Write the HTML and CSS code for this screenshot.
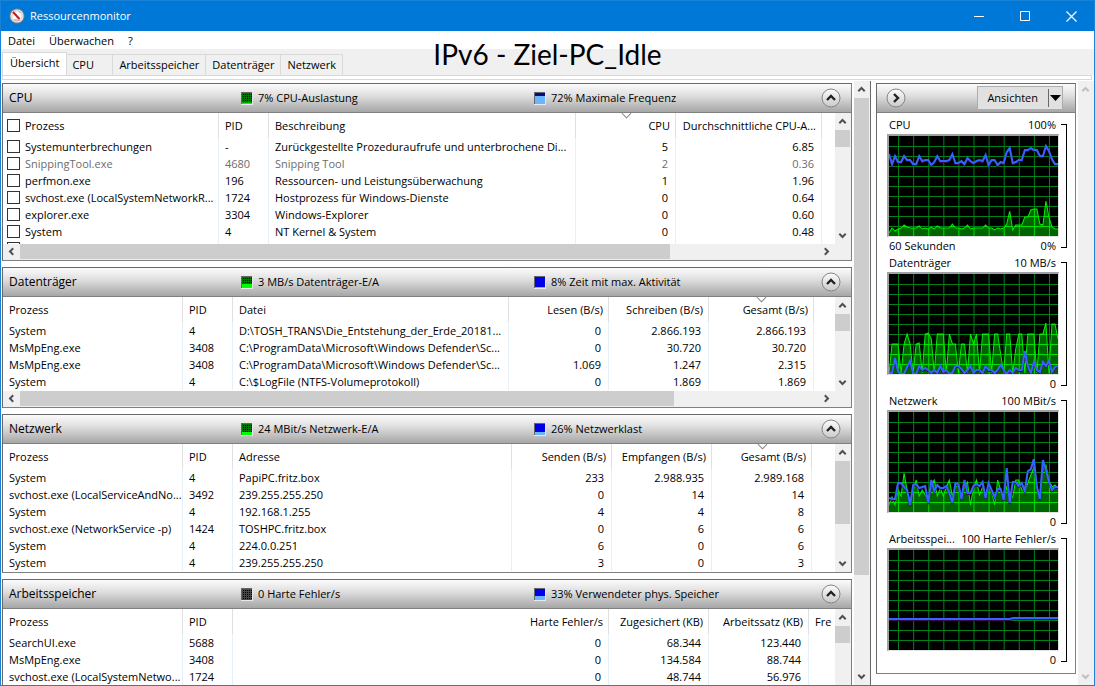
FILE: index.html
```html
<!DOCTYPE html>
<html lang="de">
<head>
  <meta charset="utf-8">
  <title>Ressourcenmonitor</title>
  <link rel="stylesheet" href="styles.css">
</head>

<body>
  <!-- shared shapes -->
  <svg class="defs" width="0" height="0" aria-hidden="true">
    <defs>
      <pattern id="dots" width="2" height="2" patternUnits="userSpaceOnUse">
        <rect width="2" height="2" fill="#007800"/>
        <rect width="1" height="1" fill="#001000"/>
      </pattern>
      <pattern id="dots-dark" width="2" height="2" patternUnits="userSpaceOnUse">
        <rect width="2" height="2" fill="#484848"/>
        <rect width="1" height="1" fill="#000"/>
      </pattern>
      <pattern id="dots-blue" width="2" height="2" patternUnits="userSpaceOnUse">
        <rect width="2" height="2" fill="#0000e6"/>
        <rect width="1" height="1" fill="#000070"/>
      </pattern>
      <linearGradient id="knob" x1="0" y1="0" x2="0" y2="1">
        <stop offset="0" stop-color="#fdfdfd"/>
        <stop offset="1" stop-color="#c9c9c9"/>
      </linearGradient>
      <symbol id="up" viewBox="0 0 9 9"><path d="M1.3 6.2 4.5 3l3.2 3.2" fill="none" stroke="currentColor" stroke-width="2"/></symbol>
      <symbol id="down" viewBox="0 0 9 9"><path d="M1.3 2.8 4.5 6l3.2-3.2" fill="none" stroke="currentColor" stroke-width="2"/></symbol>
      <symbol id="left" viewBox="0 0 9 9"><path d="M6.2 1.3 3 4.5l3.2 3.2" fill="none" stroke="currentColor" stroke-width="2"/></symbol>
      <symbol id="right" viewBox="0 0 9 9"><path d="M2.8 1.3 6 4.5 2.8 7.7" fill="none" stroke="currentColor" stroke-width="2"/></symbol>
      <symbol id="round-up" viewBox="0 0 20 20">
        <circle cx="10" cy="10" r="9" fill="url(#knob)" stroke="#858585"/>
        <path d="M6 12l4-4 4 4" fill="none" stroke="#222" stroke-width="2.4"/>
      </symbol>
      <symbol id="round-right" viewBox="0 0 20 20">
        <circle cx="10" cy="10" r="9" fill="url(#knob)" stroke="#858585"/>
        <path d="M8 6l4 4-4 4" fill="none" stroke="#222" stroke-width="2.4"/>
      </symbol>
    </defs>
  </svg>

  <div class="window">
    <header class="titlebar">
      <svg class="app-icon" width="16" height="16" viewBox="0 0 16 16">
        <circle cx="8" cy="8" r="7.5" fill="#8d8580"/>
        <circle cx="8" cy="8" r="6.6" fill="#e9e4df"/>
        <circle cx="8" cy="8" r="5" fill="#fff" stroke="#c4bdb6" stroke-width=".6"/>
        <path d="M4 4l6.500 7" stroke="#c4161c" stroke-width="2"/>
        <path d="M10 3.500l1.600 1.800M5 12h6" stroke="#8a8a8a" stroke-width=".8"/>
      </svg>
      <span class="window-title">Ressourcenmonitor</span>
      <button class="window-button" aria-label="Minimieren"><svg width="11" height="11"><path d="M0 5.500h10" stroke="#fff"/></svg></button>
      <button class="window-button" aria-label="Maximieren"><svg width="11" height="11"><path d="M.5.5h9v9h-9z" fill="none" stroke="#fff"/></svg></button>
      <button class="window-button" aria-label="Schließen"><svg width="11" height="11"><path d="M.5.5l10 10M10.500.5l-10 10" stroke="#fff" stroke-width="1.2"/></svg></button>
    </header>

    <nav class="menubar">
      <button>Datei</button>
      <button>Überwachen</button>
      <button>?</button>
    </nav>

    <div class="tabs" role="tablist">
      <button class="tab active" role="tab" aria-selected="true">Übersicht</button>
      <button class="tab tab-cpu" role="tab">CPU</button>
      <button class="tab" role="tab">Arbeitsspeicher</button>
      <button class="tab" role="tab">Datenträger</button>
      <button class="tab" role="tab">Netzwerk</button>
    </div>
    <div class="tab-edge"></div>

    <h1 class="caption">IPv6 - Ziel-PC_Idle</h1>

    <main class="content">
      <div class="sections">

        <section class="panel">
          <div class="panel-head">
            <h2>CPU</h2>
            <span class="meter"><svg width="12" height="13"><path d="M0 0h12v13H0z" fill="#e8e8e8"/><path d="M0 0h11v12H0z" fill="#666"/><path d="M1 1h10v11H1z" fill="url(#dots)"/><path d="M1 10.500h10V12H1z" fill="#0f0"/></svg>7% CPU-Auslastung</span>
            <span class="meter"><svg width="12" height="13"><path d="M0 0h12v13H0z" fill="#e8e8e8"/><path d="M0 0h11v12H0z" fill="#666"/><path d="M1 1h10v4H1z" fill="url(#dots-blue)"/><path d="M1 4h10v8H1z" fill="#6cb4ff"/></svg>72% Maximale Frequenz</span>
            <button class="round" aria-label="CPU einklappen"><svg width="20" height="20"><use href="#round-up"/></svg></button>
          </div>
          <div class="list list-cpu">
            <div class="list-view">
              <table>
                <colgroup><col class="w216"><col class="w50"><col class="w307"><col class="w100"><col class="w146"><col></colgroup>
                <thead>
                  <tr><th class="check"><label><input type="checkbox"> Prozess</label></th><th>PID</th><th>Beschreibung</th><th class="num sorted">CPU</th><th class="num">Durchschnittliche CPU-A...</th><th></th></tr>
                </thead>
                <tbody>
                  <tr><td class="check"><label><input type="checkbox">Systemunterbrechungen</label></td><td>-</td><td>Zurückgestellte Prozeduraufrufe und unterbrochene Di...</td><td class="num">5</td><td class="num">6.85</td><td></td></tr>
                  <tr class="dim"><td class="check"><label><input type="checkbox">SnippingTool.exe</label></td><td>4680</td><td>Snipping Tool</td><td class="num">2</td><td class="num">0.36</td><td></td></tr>
                  <tr><td class="check"><label><input type="checkbox">perfmon.exe</label></td><td>196</td><td>Ressourcen- und Leistungsüberwachung</td><td class="num">1</td><td class="num">1.96</td><td></td></tr>
                  <tr><td class="check"><label><input type="checkbox">svchost.exe (LocalSystemNetworkR...</label></td><td>1724</td><td>Hostprozess für Windows-Dienste</td><td class="num">0</td><td class="num">0.64</td><td></td></tr>
                  <tr><td class="check"><label><input type="checkbox">explorer.exe</label></td><td>3304</td><td>Windows-Explorer</td><td class="num">0</td><td class="num">0.60</td><td></td></tr>
                  <tr><td class="check"><label><input type="checkbox">System</label></td><td>4</td><td>NT Kernel &amp; System</td><td class="num">0</td><td class="num">0.48</td><td></td></tr>
                  <tr><td class="check"><label><input type="checkbox" aria-label="Prozess"></label></td><td></td><td></td><td></td><td></td><td></td></tr>
                </tbody>
              </table>
            </div>
            <div class="vscroll">
              <button aria-label="Nach oben"><svg width="9" height="9"><use href="#up"/></svg></button>
              <div class="thumb"></div>
              <button class="end" aria-label="Nach unten"><svg width="9" height="9"><use href="#down"/></svg></button>
            </div>
          </div>
          <div class="hscroll">
            <button aria-label="Nach links"><svg width="9" height="9"><use href="#left"/></svg></button>
            <div class="track"><div class="thumb thumb-cpu"></div></div>
            <button aria-label="Nach rechts"><svg width="9" height="9"><use href="#right"/></svg></button>
          </div>
        </section>

        <section class="panel">
          <div class="panel-head">
            <h2>Datenträger</h2>
            <span class="meter"><svg width="12" height="13"><path d="M0 0h12v13H0z" fill="#e8e8e8"/><path d="M0 0h11v12H0z" fill="#666"/><path d="M1 1h10v11H1z" fill="url(#dots)"/><path d="M1 8h10v4H1z" fill="#0f0"/></svg>3 MB/s Datenträger-E/A</span>
            <span class="meter"><svg width="12" height="13"><path d="M0 0h12v13H0z" fill="#e8e8e8"/><path d="M0 0h11v12H0z" fill="#666"/><path d="M1 1h10v11H1z" fill="#0000e6"/><path d="M1 11h10v1H1z" fill="#6cb4ff"/></svg>8% Zeit mit max. Aktivität</span>
            <button class="round" aria-label="Datenträger einklappen"><svg width="20" height="20"><use href="#round-up"/></svg></button>
          </div>
          <div class="list list-disk">
            <div class="list-view">
              <table>
                <colgroup><col class="w180"><col class="w50"><col class="w276"><col class="w100"><col class="w100"><col class="w105"><col></colgroup>
                <thead>
                  <tr><th>Prozess</th><th>PID</th><th>Datei</th><th class="num">Lesen (B/s)</th><th class="num">Schreiben (B/s)</th><th class="num sorted">Gesamt (B/s)</th><th></th></tr>
                </thead>
                <tbody>
                  <tr><td>System</td><td>4</td><td>D:\TOSH_TRANS\Die_Entstehung_der_Erde_20181...</td><td class="num">0</td><td class="num">2.866.193</td><td class="num">2.866.193</td><td></td></tr>
                  <tr><td>MsMpEng.exe</td><td>3408</td><td>C:\ProgramData\Microsoft\Windows Defender\Sc...</td><td class="num">0</td><td class="num">30.720</td><td class="num">30.720</td><td></td></tr>
                  <tr><td>MsMpEng.exe</td><td>3408</td><td>C:\ProgramData\Microsoft\Windows Defender\Sc...</td><td class="num">1.069</td><td class="num">1.247</td><td class="num">2.315</td><td></td></tr>
                  <tr><td>System</td><td>4</td><td>C:\$LogFile (NTFS-Volumeprotokoll)</td><td class="num">0</td><td class="num">1.869</td><td class="num">1.869</td><td></td></tr>
                </tbody>
              </table>
            </div>
            <div class="vscroll">
              <button aria-label="Nach oben"><svg width="9" height="9"><use href="#up"/></svg></button>
              <div class="thumb"></div>
              <button class="end" aria-label="Nach unten"><svg width="9" height="9"><use href="#down"/></svg></button>
            </div>
          </div>
          <div class="hscroll">
            <button aria-label="Nach links"><svg width="9" height="9"><use href="#left"/></svg></button>
            <div class="track"><div class="thumb thumb-disk"></div></div>
            <button aria-label="Nach rechts"><svg width="9" height="9"><use href="#right"/></svg></button>
          </div>
        </section>

        <section class="panel">
          <div class="panel-head">
            <h2>Netzwerk</h2>
            <span class="meter"><svg width="12" height="13"><path d="M0 0h12v13H0z" fill="#e8e8e8"/><path d="M0 0h11v12H0z" fill="#666"/><path d="M1 1h10v11H1z" fill="url(#dots)"/><path d="M1 9h10v3H1z" fill="#0f0"/></svg>24 MBit/s Netzwerk-E/A</span>
            <span class="meter"><svg width="12" height="13"><path d="M0 0h12v13H0z" fill="#e8e8e8"/><path d="M0 0h11v12H0z" fill="#666"/><path d="M1 1h10v11H1z" fill="#0000e6"/><path d="M1 9h10v3H1z" fill="#6cb4ff"/></svg>26% Netzwerklast</span>
            <button class="round" aria-label="Netzwerk einklappen"><svg width="20" height="20"><use href="#round-up"/></svg></button>
          </div>
          <div class="list list-net">
            <div class="list-view">
              <table>
                <colgroup><col class="w180"><col class="w50"><col class="w279"><col class="w100"><col class="w100"><col class="w100"><col></colgroup>
                <thead>
                  <tr><th>Prozess</th><th>PID</th><th>Adresse</th><th class="num">Senden (B/s)</th><th class="num">Empfangen (B/s)</th><th class="num sorted">Gesamt (B/s)</th><th></th></tr>
                </thead>
                <tbody>
                  <tr><td>System</td><td>4</td><td>PapiPC.fritz.box</td><td class="num">233</td><td class="num">2.988.935</td><td class="num">2.989.168</td><td></td></tr>
                  <tr><td>svchost.exe (LocalServiceAndNo...</td><td>3492</td><td>239.255.255.250</td><td class="num">0</td><td class="num">14</td><td class="num">14</td><td></td></tr>
                  <tr><td>System</td><td>4</td><td>192.168.1.255</td><td class="num">4</td><td class="num">4</td><td class="num">8</td><td></td></tr>
                  <tr><td>svchost.exe (NetworkService -p)</td><td>1424</td><td>TOSHPC.fritz.box</td><td class="num">0</td><td class="num">6</td><td class="num">6</td><td></td></tr>
                  <tr><td>System</td><td>4</td><td>224.0.0.251</td><td class="num">6</td><td class="num">0</td><td class="num">6</td><td></td></tr>
                  <tr><td>System</td><td>4</td><td>239.255.255.250</td><td class="num">3</td><td class="num">0</td><td class="num">3</td><td></td></tr>
                </tbody>
              </table>
            </div>
            <div class="vscroll">
              <button aria-label="Nach oben"><svg width="9" height="9"><use href="#up"/></svg></button>
              <div class="thumb thumb-net"></div>
              <button class="end" aria-label="Nach unten"><svg width="9" height="9"><use href="#down"/></svg></button>
            </div>
          </div>
        </section>

        <section class="panel panel-last">
          <div class="panel-head">
            <h2>Arbeitsspeicher</h2>
            <span class="meter"><svg width="12" height="13"><path d="M0 0h12v13H0z" fill="#e8e8e8"/><path d="M0 0h11v12H0z" fill="#666"/><path d="M1 1h10v11H1z" fill="url(#dots-dark)"/></svg>0 Harte Fehler/s</span>
            <span class="meter"><svg width="12" height="13"><path d="M0 0h12v13H0z" fill="#e8e8e8"/><path d="M0 0h11v12H0z" fill="#666"/><path d="M1 1h10v11H1z" fill="#0000e6"/><path d="M1 8h10v4H1z" fill="#6cb4ff"/></svg>33% Verwendeter phys. Speicher</span>
            <button class="round" aria-label="Arbeitsspeicher einklappen"><svg width="20" height="20"><use href="#round-up"/></svg></button>
          </div>
          <div class="list">
            <div class="list-view">
              <table>
                <colgroup><col class="w180"><col class="w50"><col class="w376"><col class="w100"><col class="w100"><col></colgroup>
                <thead>
                  <tr><th>Prozess</th><th>PID</th><th class="num">Harte Fehler/s</th><th class="num">Zugesichert (KB)</th><th class="num">Arbeitssatz (KB)</th><th>Fre</th></tr>
                </thead>
                <tbody>
                  <tr><td>SearchUI.exe</td><td>5688</td><td class="num">0</td><td class="num">68.344</td><td class="num">123.440</td><td></td></tr>
                  <tr><td>MsMpEng.exe</td><td>3408</td><td class="num">0</td><td class="num">134.584</td><td class="num">88.744</td><td></td></tr>
                  <tr><td>svchost.exe (LocalSystemNetwo...</td><td>1724</td><td class="num">0</td><td class="num">48.744</td><td class="num">56.976</td><td></td></tr>
                </tbody>
              </table>
            </div>
            <div class="vscroll">
              <button aria-label="Nach oben"><svg width="9" height="9"><use href="#up"/></svg></button>
              <div class="thumb"></div>
            </div>
          </div>
        </section>
      </div>

      <div class="vscroll">
        <button aria-label="Nach oben"><svg width="9" height="9"><use href="#up"/></svg></button>
        <div class="thumb thumb-main"></div>
        <button class="end" aria-label="Nach unten"><svg width="9" height="9"><use href="#down"/></svg></button>
      </div>

      <aside class="sidebar">
        <section class="panel graphs">
          <div class="graphs-head">
            <button class="round" aria-label="Diagramme ausblenden"><svg width="20" height="20"><use href="#round-right"/></svg></button>
            <button class="views">Ansichten<span class="views-arrow"><svg width="11" height="6"><path d="M0 0h11L5.500 6z"/></svg></span></button>
          </div>
          <div class="graph">
            <div class="graph-body">
              <div class="graph-label"><span>CPU</span><span>100%</span></div>
              <svg class="plot" data-series="cpu" viewBox="0 0 168 100" preserveAspectRatio="none"></svg>
              <div class="graph-label"><span>60 Sekunden</span><span>0%</span></div>
            </div>
            <div class="bracket"></div>
          </div>
          <div class="graph">
            <div class="graph-body">
              <div class="graph-label"><span>Datenträger</span><span>10 MB/s</span></div>
              <svg class="plot" data-series="disk" viewBox="0 0 168 100" preserveAspectRatio="none"></svg>
              <div class="graph-label"><span></span><span>0</span></div>
            </div>
            <div class="bracket"></div>
          </div>
          <div class="graph">
            <div class="graph-body">
              <div class="graph-label"><span>Netzwerk</span><span>100 MBit/s</span></div>
              <svg class="plot" data-series="net" viewBox="0 0 168 100" preserveAspectRatio="none"></svg>
              <div class="graph-label"><span></span><span>0</span></div>
            </div>
            <div class="bracket"></div>
          </div>
          <div class="graph">
            <div class="graph-body">
              <div class="graph-label"><span>Arbeitsspei...</span><span>100 Harte Fehler/s</span></div>
              <svg class="plot" data-series="mem" viewBox="0 0 168 100" preserveAspectRatio="none"></svg>
              <div class="graph-label"><span></span><span>0</span></div>
            </div>
            <div class="bracket"></div>
          </div>
        </section>
        <div class="vscroll disabled">
          <button aria-label="Nach oben" disabled><svg width="9" height="9"><use href="#up"/></svg></button>
          <button class="end" aria-label="Nach unten" disabled><svg width="9" height="9"><use href="#down"/></svg></button>
        </div>
      </aside>
    </main>
  </div>

  <script src="graphs.js"></script>
</body>
</html>
```

FILE: graphs.js
```js
// one sample every 3 units, measured from the top of the plot (0 - 100)
var series = {
  cpu: {
    green: [97,92,95,93,92,89,91,92,92,92,90,93,92,93,91,93,90,92,92,92,92,88,92,92,93,92,89,93,92,92,92,92,89,92,92,94,92,93,92,88,75,94,89,89,89,81,81,74,73,73,88,89,65,81,91,93,93],
    blue: [18,28,20,26,26,20,24,24,28,28,20,25,24,24,29,26,20,25,25,25,24,18,27,27,25,28,22,25,27,25,24,25,19,29,24,24,29,26,27,16,12,27,26,24,24,14,14,12,14,14,20,20,10,15,23,28,28]
  },
  disk: {
    green: [100,70,70,70,99,70,60,70,99,70,69,99,60,59,65,99,60,60,60,99,60,70,70,99,70,70,99,60,70,60,99,60,60,60,99,60,60,80,99,60,60,99,75,60,60,99,60,60,60,99,60,60,49,99,50,50,65],
    blue: [99,99,84,98,100,100,93,87,100,100,92,96,94,96,99,96,99,92,98,96,100,99,92,92,95,99,96,92,99,96,96,99,92,96,96,99,96,91,96,100,96,99,94,96,96,77,92,99,88,96,98,88,92,87,98,93,92]
  },
  net: {
    green: [93,85,93,78,84,61,78,90,78,68,84,78,83,88,73,68,84,76,84,75,68,84,75,73,84,75,70,93,75,68,83,75,84,73,80,93,68,78,86,75,86,85,68,68,78,79,71,63,55,75,86,57,53,68,75,73,76],
    blue: [86,87,87,71,71,75,78,93,73,72,76,75,74,91,68,79,73,76,76,74,81,91,71,72,87,68,81,81,74,72,74,70,86,71,78,85,77,77,88,56,91,70,70,74,71,79,59,57,47,75,87,48,58,70,78,75,75]
  },
  mem: { green: [], blue: [] }
};

for (let i = 0; i < 57; i++) {
  series.mem.green.push(100);
  series.mem.blue.push(i < 41 ? 69 : 68);
}

function toPoints(values) {
  return values.map((v, i) => i * 3 + "," + v).join(" ");
}

function gridPath() {
  let d = "";
  for (let x = 9.5; x < 168; x += 15) {
    d += "M" + x + " 0V100";
  }
  for (let y = 10.5; y < 100; y += 10) {
    d += "M0 " + y + "H168";
  }
  return d;
}

document.querySelectorAll(".plot").forEach(function (svg) {
  const name = svg.dataset.series;
  const data = series[name];
  const area = "0,100 " + toPoints(data.green) + " 168,100";
  svg.innerHTML =
    '<path class="grid" d="' + gridPath() + '"/>' +
    '<clipPath id="clip-' + name + '"><polygon points="' + area + '"/></clipPath>' +
    '<polygon class="area" points="' + area + '"/>' +
    '<path class="grid grid-lit" clip-path="url(#clip-' + name + ')" d="' + gridPath() + '"/>' +
    (name === "mem" ? "" : '<polyline class="line-green" points="' + toPoints(data.green) + '"/>') +
    '<polyline class="line-shadow" points="' + toPoints(data.blue.map(v => v + 1)) + '"/>' +
    '<polyline class="line-blue" points="' + toPoints(data.blue) + '"/>';
});
```

FILE: styles.css
```css
* {
  box-sizing: border-box;
}

body {
  margin: 0;
  font-family: "Open Sans", "Noto Sans", sans-serif;
  font-size: 11px;
  line-height: 16px;
  color: #000;
  background-color: #fff;
}

button {
  margin: 0;
  padding: 0;
  border: none;
  background: none;
  font: inherit;
  color: inherit;
}

h1,
h2 {
  margin: 0;
  font-weight: normal;
}

svg {
  display: block;
  flex: none;
}

.defs {
  position: absolute;
}

.window {
  position: relative;
  display: flex;
  flex-direction: column;
  height: 100vh;
  overflow: hidden;
  border: 1px solid #1883d7;
}

/* title bar and menu */

.titlebar {
  display: flex;
  align-items: center;
  flex: none;
  height: 30px;
  padding-left: 8px;
  background-color: #0078d7;
  color: #fff;
}

.window-title {
  flex: 1;
  margin-left: 5px;
}

.window-button {
  display: flex;
  align-items: center;
  justify-content: center;
  width: 46px;
  height: 30px;
}

.menubar {
  display: flex;
  flex: none;
  gap: 14px;
  height: 18px;
  padding-left: 7px;
}

.menubar button {
  height: 20px;
}

/* tabs */

.tabs {
  display: flex;
  align-items: flex-end;
  flex: none;
  height: 26px;
  padding-left: 1px;
  background-color: #f0f0f0;
}

.tab {
  height: 21px;
  padding: 0 6px;
  border: 1px solid #d9d9d9;
  border-left: none;
  border-bottom: none;
}

.tab.active {
  height: 23px;
  padding: 0 7px 2px;
  border-left: 1px solid #d9d9d9;
  background-color: #fff;
}

.tab-cpu {
  width: 46px;
  padding-left: 5px;
  text-align: left;
}

.tab-edge {
  flex: none;
  height: 5px;
  margin: 0 2px 0 1px;
  border: 1px solid #d9d9d9;
  background-color: #fff;
}

.caption {
  position: absolute;
  top: 35px;
  left: 50%;
  transform: translateX(-50%);
  font-family: Lato, "Open Sans", sans-serif;
  font-size: 28px;
  line-height: 36px;
  white-space: nowrap;
}

/* sections */

.content {
  display: flex;
  flex: 1;
  min-height: 0;
  padding-top: 1px;
}

.sections {
  display: flex;
  flex-direction: column;
  flex: 1;
  gap: 6px;
  min-width: 0;
  padding: 2px 2px 0 1px;
  overflow: hidden;
}

.panel {
  flex: none;
  border: 1px solid #696969;
  border-right-color: #808080;
  border-bottom-color: #808080;
}

.panel-last {
  display: flex;
  flex-direction: column;
  flex: 1;
  border-bottom: none;
  min-height: 0;
}

.panel-head {
  display: grid;
  grid-template-columns: 232px 293px 1fr 20px;
  align-items: center;
  flex: none;
  height: 29px;
  padding: 0 10px 0 6px;
  border-bottom: 1px solid #808080;
  background-image: linear-gradient(#fbfbfb, #e0e0e0 40%, #a6a6a6);
}

.panel-head h2 {
  font-size: 12px;
}

.meter {
  display: flex;
  align-items: center;
  gap: 5px;
}

.round {
  width: 20px;
  height: 20px;
}

/* lists */

.list {
  display: flex;
  overflow: hidden;
}

.list-cpu {
  height: 131px;
}

.list-disk {
  height: 94px;
}

.list-net {
  height: 128px;
}

.panel-last .list {
  flex: 1;
}

.list-view {
  flex: 1;
  min-width: 0;
  overflow: hidden;
}

table {
  width: 100%;
  table-layout: fixed;
  border-collapse: separate;
  border-spacing: 0;
}

.w50 { width: 50px; }
.w100 { width: 100px; }
.w105 { width: 105px; }
.w146 { width: 146px; }
.w180 { width: 180px; }
.w216 { width: 216px; }
.w276 { width: 276px; }
.w279 { width: 279px; }
.w307 { width: 307px; }
.w376 { width: 376px; }

th,
td {
  height: 17px;
  padding: 0 0 0 6px;
  border-right: 1px solid #e6f0fa;
  overflow: hidden;
  font-weight: normal;
  line-height: 16px;
  text-align: left;
  white-space: nowrap;
}

th {
  position: relative;
  height: 25px;
  border-right-color: #e0e0e0;
}

th:last-child,
td:last-child {
  border-right: none;
}

th.num {
  padding-right: 5px;
  text-align: right;
}

td.num {
  padding-right: 7px;
  text-align: right;
}

.check {
  padding-left: 4px;
}

.check label {
  display: flex;
  align-items: center;
  gap: 5px;
}

input[type="checkbox"] {
  appearance: none;
  flex: none;
  width: 13px;
  height: 13px;
  margin: 0;
  border: 1px solid #333;
  background-color: #fff;
}

.dim {
  color: #6d6d6d;
}

/* sort marker sits on the top edge of the heading */
.sorted::before {
  content: "";
  position: absolute;
  top: -3px;
  left: 50%;
  width: 6px;
  height: 6px;
  margin-left: -3px;
  border: solid #888;
  border-width: 0 1px 1px 0;
  transform: rotate(45deg);
}

/* scroll bars */

.vscroll {
  display: flex;
  flex-direction: column;
  flex: none;
  width: 16px;
  background-color: #f0f0f0;
  color: #505050;
}

.hscroll {
  display: flex;
  height: 16px;
  padding-right: 16px;
  background-color: #f0f0f0;
  color: #505050;
}

.vscroll button,
.hscroll button {
  display: flex;
  align-items: center;
  justify-content: center;
  flex: none;
  width: 17px;
  height: 17px;
}

.vscroll button {
  width: 15px;
}

.hscroll button {
  height: 15px;
}

.vscroll .end {
  margin-top: auto;
}

.vscroll.disabled {
  color: #bfbfbf;
}

.thumb {
  width: 15px;
  height: 17px;
  background-color: #cdcdcd;
}

.track {
  flex: 1;
}

.hscroll .thumb {
  height: 15px;
}

.thumb-cpu {
  width: 81.5%;
}

.thumb-disk {
  width: 82%;
}

.thumb-net {
  height: 63px;
}

.thumb-main {
  height: 79%;
}

/* graphs */

.sidebar {
  display: flex;
  justify-content: space-between;
  flex: none;
  width: 224px;
  border-left: 1px solid #696969;
}

.graphs {
  align-self: flex-start;
  width: 200px;
  margin: 2px 0 0 5px;
  padding-bottom: 5px;
}

.graphs-head {
  display: flex;
  align-items: center;
  justify-content: space-between;
  height: 29px;
  margin-bottom: 3px;
  padding: 0 12px 0 9px;
  border-bottom: 1px solid #808080;
  background-image: linear-gradient(#fbfbfb, #e0e0e0 40%, #a6a6a6);
}

.views {
  display: flex;
  align-items: center;
  height: 24px;
  padding-left: 9px;
  border: 1px solid #adadad;
  background-color: #e1e1e1;
}

.views-arrow {
  display: flex;
  align-items: center;
  height: 18px;
  margin-left: 10px;
  padding: 0 1px;
  border-left: 1px solid #696969;
}

.graph {
  display: flex;
  gap: 2px;
  height: 138px;
  padding: 0 8px 0 10px;
}

.graph-body {
  flex: 1;
  min-width: 0;
}

.graph-label {
  display: flex;
  justify-content: space-between;
  height: 18px;
  padding: 0 3px 0 2px;
  line-height: 17px;
  white-space: nowrap;
}

.plot {
  width: 100%;
  height: 103px;
  border: solid #a0a0a0;
  border-width: 2px 1px 1px 2px;
  border-right-color: #e3e3e3;
  border-bottom-color: #e3e3e3;
  background-color: #000;
}

.bracket {
  width: 6px;
  margin: 8px 0 6px;
  border: solid #000;
  border-width: 1px 1px 1px 0;
}

.grid {
  fill: none;
  stroke: #008218;
}

.grid-lit {
  stroke: #00e000;
}

.area {
  fill: #006400;
}

.line-green {
  fill: none;
  stroke: #00f000;
}

.line-shadow {
  fill: none;
  stroke: #3a0a4a;
  stroke-width: 2;
}

.line-blue {
  fill: none;
  stroke: #3264ff;
  stroke-width: 2;
}
```
